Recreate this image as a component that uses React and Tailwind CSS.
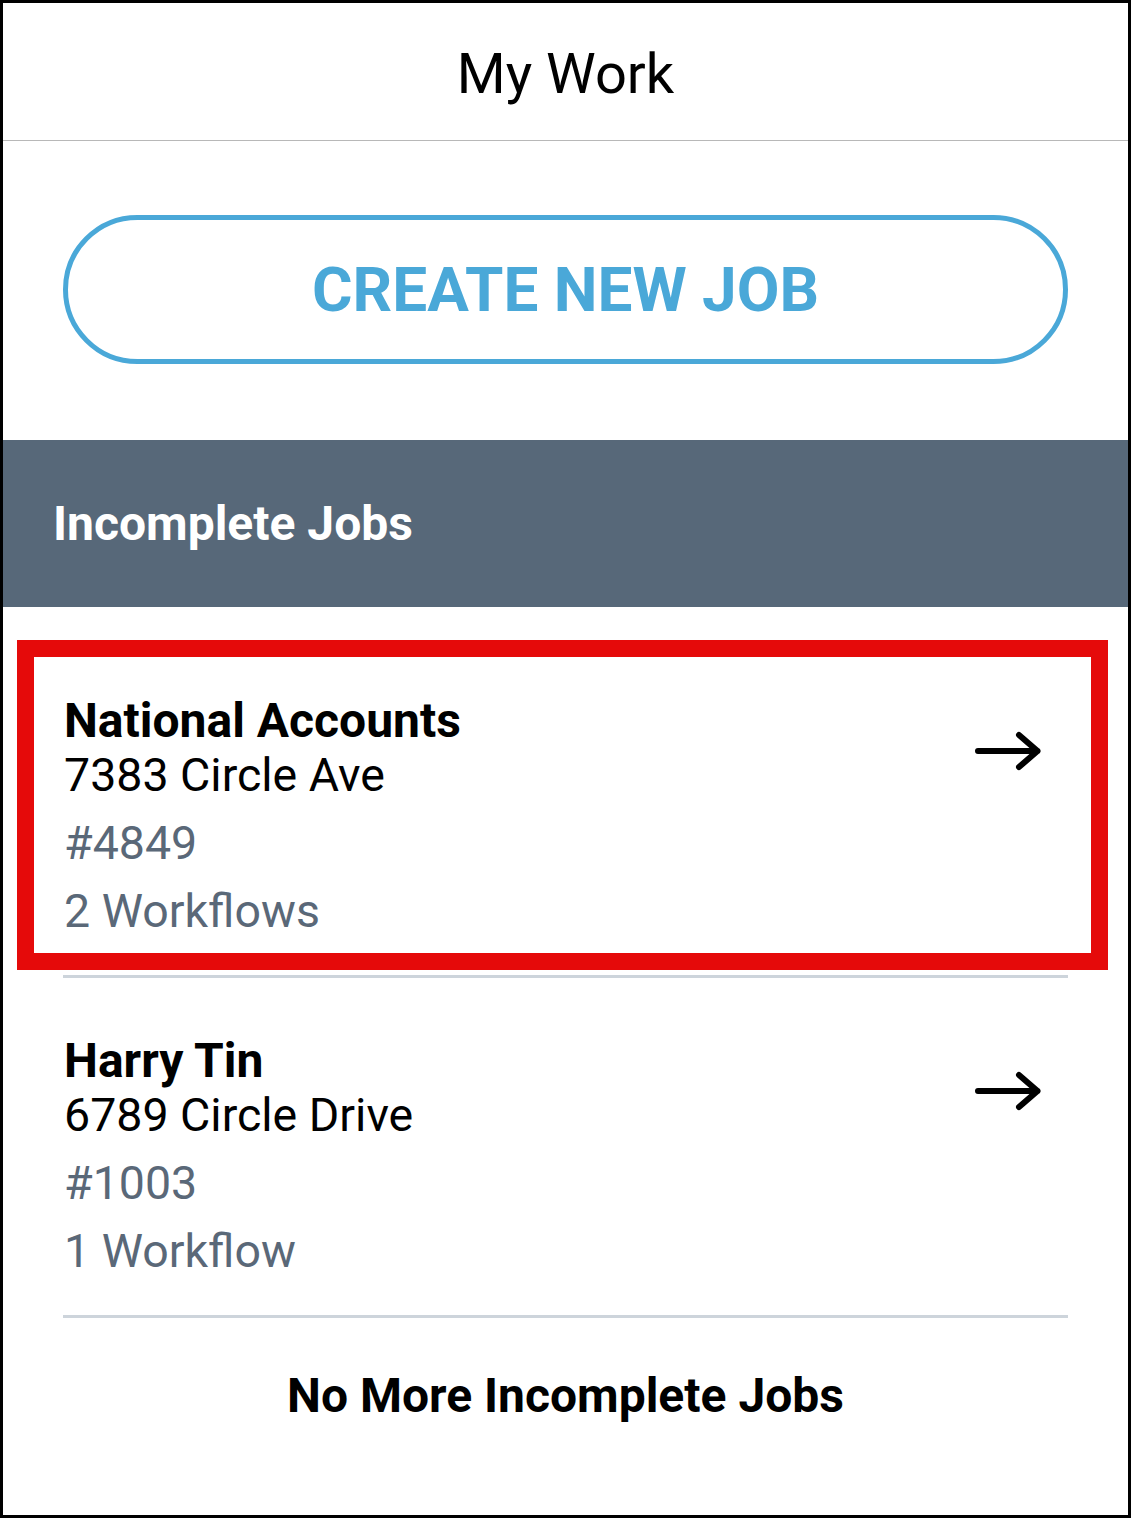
import React from "react";

function Arrow() {
  return (
    <svg width="70" height="40" viewBox="0 0 70 40" className="shrink-0 mt-[38px]">
      <path d="M6 20 H65.5 M47 4 L65.5 20 L47 36" fill="none" stroke="#000" strokeWidth="6" strokeLinecap="round" strokeLinejoin="round" />
    </svg>
  );
}

function JobItem({ name, address, number, workflows, highlighted }) {
  return (
    <div className="relative">
      <div className="flex items-start justify-between pl-[61px] pr-[86px] pt-[55px] pb-[36px]">
        <div className="flex flex-col">
          <div className="text-[48px] leading-[55px] font-bold text-black">{name}</div>
          <div className="text-[46.5px] leading-[55px] text-black">{address}</div>
          <div className="text-[46.5px] leading-[55px] mt-[13px] text-[#5a6878]">{number}</div>
          <div className="text-[46.5px] leading-[55px] mt-[13px] text-[#5a6878]">{workflows}</div>
        </div>
        <Arrow />
      </div>
      <div className="mx-[60px] h-[3px] bg-[#cdd4db]" />
      {highlighted && (
        <div className="absolute top-[2px] left-[14px] right-[20px] bottom-[8px] border-[17px] border-[#e50a0a] pointer-events-none" />
      )}
    </div>
  );
}

export default function App() {
  return (
    <div
      className="w-[1131px] h-[1518px] border-[3px] border-black bg-white flex flex-col overflow-hidden"
      style={{ fontFamily: "Roboto, 'Liberation Sans', sans-serif" }}
    >
      <div className="h-[138px] flex items-center justify-center pt-[4px] border-b border-[#b8b8b8] shrink-0">
        <span className="text-[56px] leading-[66px] text-black">My Work</span>
      </div>
      <div className="px-[60px] pt-[74px] pb-[76px] shrink-0">
        <div className="h-[149px] rounded-full border-[5px] border-[#4aa8d8] flex items-center justify-center">
          <span className="text-[62px] leading-[72px] font-bold text-[#4aa8d8]">CREATE NEW JOB</span>
        </div>
      </div>
      <div className="h-[167px] bg-[#576879] flex items-center pl-[50px] shrink-0">
        <span className="text-[48px] leading-[56px] font-bold text-white">Incomplete Jobs</span>
      </div>
      <div className="pt-[31px]">
        <JobItem name="National Accounts" address="7383 Circle Ave" number="#4849" workflows="2 Workflows" highlighted />
        <JobItem name="Harry Tin" address="6789 Circle Drive" number="#1003" workflows="1 Workflow" />
      </div>
      <div className="pt-[50px] text-center">
        <span className="text-[48px] leading-[56px] font-bold text-black">No More Incomplete Jobs</span>
      </div>
    </div>
  );
}
